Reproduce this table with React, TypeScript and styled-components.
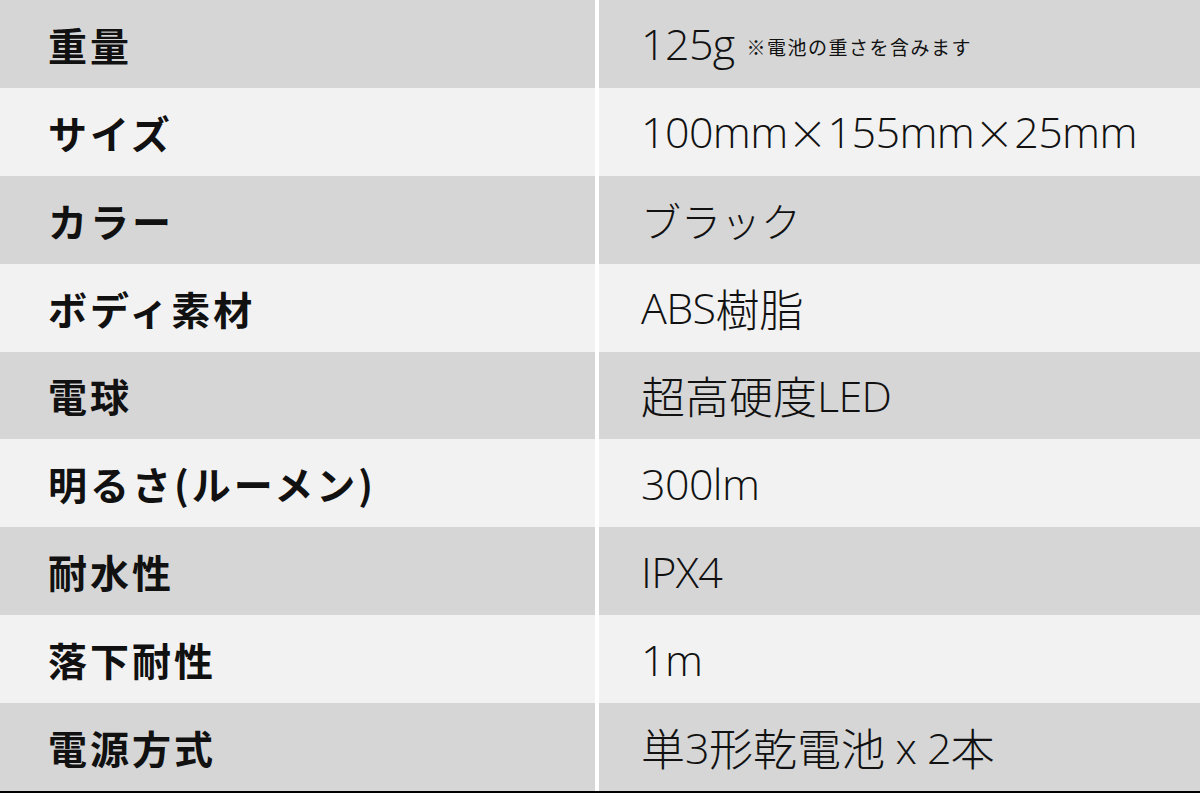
import React from 'react';
import styled, { createGlobalStyle } from 'styled-components';

const GlobalStyle = createGlobalStyle`
  html, body {
    margin: 0;
    padding: 0;
    background: #ffffff;
  }
  body {
    font-family: 'Noto Sans CJK JP', 'Noto Sans', sans-serif;
    color: #111111;
  }
`;

// Spec table
const Table = styled.div`
  width: 1200px;
  height: 791px;
  display: grid;
  grid-template-rows: repeat(9, 1fr);
  border-bottom: 2px solid #000000;
`;

const Row = styled.div<{ $shaded: boolean }>`
  display: flex;
  background-color: ${p => (p.$shaded ? '#d6d6d6' : '#f2f2f2')};
`;

const Label = styled.div`
  width: 595px;
  flex: none;
  display: flex;
  align-items: center;
  padding-left: 48px;
  box-sizing: border-box;
  font-size: 39px;
  font-weight: 700;
  letter-spacing: 3px;
  color: #111111;
`;

const Value = styled.div`
  flex: 1;
  display: flex;
  align-items: center;
  padding-left: 42px;
  border-left: 4px solid #ffffff;
  font-weight: 300;
  color: #111111;
  white-space: pre;
`;

type RunKind = 'latin' | 'kana' | 'kanji';

const runSize: Record<RunKind, string> = { latin: '43px', kana: '40px', kanji: '44px' };

// latin, kana and kanji parts of a value are set at slightly different sizes
const Run = styled.span<{ $kind: RunKind }>`
  font-family: ${p =>
    p.$kind === 'latin' ? "'Open Sans', 'Noto Sans CJK JP', sans-serif" : "'Noto Sans CJK JP', sans-serif"};
  font-size: ${p => runSize[p.$kind]};
  letter-spacing: ${p => (p.$kind === 'latin' ? '-0.6px' : '0')};
`;

const Note = styled.span`
  align-self: flex-start;
  margin-top: 33px;
  margin-left: 12px;
  font-family: 'Noto Sans CJK JP', sans-serif;
  font-size: 19px;
  font-weight: 400;
  letter-spacing: 1.5px;
`;

type Spec = { label: string; value: string; note?: string };

const specs: Spec[] = [
  { label: '重量', value: '125g', note: '※電池の重さを含みます' },
  { label: 'サイズ', value: '100mm×155mm×25mm' },
  { label: 'カラー', value: 'ブラック' },
  { label: 'ボディ素材', value: 'ABS樹脂' },
  { label: '電球', value: '超高硬度LED' },
  { label: '明るさ(ルーメン)', value: '300lm' },
  { label: '耐水性', value: 'IPX4' },
  { label: '落下耐性', value: '1m' },
  { label: '電源方式', value: '単3形乾電池 x 2本' },
];

const splitRe = /([\u3040-\u30ff×]+|[\u4e00-\u9fff]+)/;

const kindOf = (s: string): RunKind => {
  if (/^[\u3040-\u30ff×]+$/.test(s)) return 'kana';
  if (/^[\u4e00-\u9fff]+$/.test(s)) return 'kanji';
  return 'latin';
};

const renderValue = (v: string) =>
  v
    .split(splitRe)
    .filter(Boolean)
    .map((part, i) => (
      <Run key={i} $kind={kindOf(part)}>
        {part}
      </Run>
    ));

const App: React.FC = () => (
  <>
    <GlobalStyle />
    <Table>
      {specs.map((s, i) => (
        <Row key={s.label} $shaded={i % 2 === 0}>
          <Label>{s.label}</Label>
          <Value>
            {renderValue(s.value)}
            {s.note && <Note>{s.note}</Note>}
          </Value>
        </Row>
      ))}
    </Table>
  </>
);

export default App;
